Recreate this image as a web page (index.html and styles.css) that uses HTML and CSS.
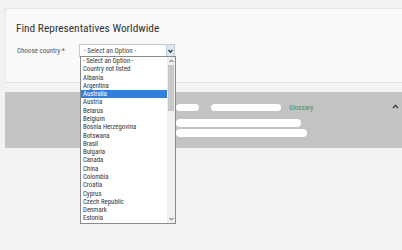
FILE: index.html
```html
<!DOCTYPE html>
<html lang="en">
<head>
    <meta charset="UTF-8">
    <title>Find Representatives Worldwide</title>
    <link rel="stylesheet" href="styles.css">
</head>
<body>
<div class="page">
    <div class="card">
        <h1 class="card-title">Find Representatives Worldwide</h1>
        <div class="form-row">
            <label class="form-label">Choose country *</label>
            <div class="select-wrap">
                <div class="select-box">
                    <span class="select-value">- Select an Option -</span>
                    <span class="select-arrow">
                        <svg width="5" height="4" viewBox="0 0 5 4"><path d="M0.5 0.8 L2.5 3.2 L4.5 0.8" fill="none" stroke="#333" stroke-width="1.3"/></svg>
                    </span>
                </div>
            </div>
        </div>
    </div>
    <div class="band">
        <div class="band-row">
            <span class="blot blot-a"></span>
            <span class="blot blot-b"></span>
            <span class="band-link">Glossary</span>
            <span class="band-caret">
                <svg width="7" height="5" viewBox="0 0 7 5"><path d="M1 4 L3.5 1.2 L6 4" fill="none" stroke="#444" stroke-width="1.4"/></svg>
            </span>
        </div>
        <span class="blot blot-c"></span>
        <span class="blot blot-d"></span>
    </div>

    <ul class="option-list">
        <li>- Select an Option -</li>
        <li>Country not listed</li>
        <li>Albania</li>
        <li>Argentina</li>
        <li class="active">Australia</li>
        <li>Austria</li>
        <li>Belarus</li>
        <li>Belgium</li>
        <li>Bosnia Herzegovina</li>
        <li>Botswana</li>
        <li>Brasil</li>
        <li>Bulgaria</li>
        <li>Canada</li>
        <li>China</li>
        <li>Colombia</li>
        <li>Croatia</li>
        <li>Cyprus</li>
        <li>Czech Republic</li>
        <li>Denmark</li>
        <li>Estonia</li>
    </ul>
    <div class="list-scroll">
        <span class="scroll-up">
            <svg width="5" height="4" viewBox="0 0 5 4"><path d="M0.5 3 L2.5 1 L4.5 3" fill="none" stroke="#555" stroke-width="1"/></svg>
        </span>
        <span class="scroll-track">
            <span class="scroll-thumb"></span>
        </span>
        <span class="scroll-down">
            <svg width="5" height="4" viewBox="0 0 5 4"><path d="M0.5 1 L2.5 3 L4.5 1" fill="none" stroke="#555" stroke-width="1"/></svg>
        </span>
    </div>
</div>
</body>
</html>
```

FILE: styles.css
```css
*{
    margin: 0;
    padding: 0;
    box-sizing: border-box;
}
body{
    width: 402px;
    height: 250px;
    background: #f2f2f2;
    font-family: "Roboto Condensed", Roboto, "Liberation Sans", sans-serif;
    overflow: hidden;
}
.page{
    position: relative;
    padding: 8px 0 0 5px;
}
.card{
    height: 75px;
    background: #f9f9f9;
    border-top: 1px solid #e6e6e6;
    border-left: 1px solid #e6e6e6;
    border-bottom: 1px solid #e2e2e2;
    padding: 11px 0 0 10px;
}
.card-title{
    font-size: 11.4px;
    font-weight: 400;
    color: #333;
    line-height: 16px;
}
.form-row{
    display: flex;
    align-items: center;
    margin-top: 8px;
}
.form-label{
    width: 63px;
    padding-left: 1px;
    font-size: 7px;
    color: #555;
}
.select-box{
    width: 96px;
    height: 13px;
    background: #fff;
    border: 1px solid #c8c8c8;
    display: flex;
    align-items: center;
}
.select-value{
    flex: 1;
    font-size: 7px;
    color: #444;
    padding-left: 4px;
}
.select-arrow{
    width: 8px;
    height: 100%;
    background: #dce8f5;
    border-left: 1px solid #b9cde3;
    display: flex;
    align-items: center;
    justify-content: center;
}
.band{
    margin-top: 9px;
    height: 56px;
    background: #c3c3c3;
    padding: 11px 0 0 171px;
}
.band-row{
    display: flex;
    align-items: center;
    height: 9px;
}
.blot{
    display: block;
    height: 7px;
    background: #fff;
    border-radius: 4px;
}
.blot-a{
    width: 23px;
}
.blot-b{
    width: 70px;
    margin-left: 12px;
}
.band-link{
    margin-left: 8px;
    font-size: 7px;
    color: #3f8f6a;
}
.band-caret{
    margin-left: auto;
    margin-right: 3px;
    display: flex;
    align-items: center;
    padding-bottom: 3px;
}
.blot-c{
    width: 125px;
    margin-top: 7px;
    height: 8px;
}
.blot-d{
    width: 131px;
    margin-top: 2px;
    height: 8px;
}
.option-list{
    position: absolute;
    left: 80px;
    top: 56px;
    width: 96px;
    height: 168px;
    list-style: none;
    background: #fff;
    border: 1px solid #8a8a8a;
    font-size: 6.8px;
    color: #333;
    line-height: 8.28px;
}
.option-list li{
    padding-left: 2px;
    margin-right: 8px;
}
.option-list li.active{
    background: #3080e0;
    color: #fff;
}
.list-scroll{
    position: absolute;
    left: 167px;
    top: 57px;
    width: 8px;
    height: 166px;
    background: #f0f0f0;
    display: flex;
    flex-direction: column;
    align-items: center;
}
.scroll-up,
.scroll-down{
    height: 8px;
    display: flex;
    align-items: center;
}
.scroll-track{
    flex: 1;
    width: 100%;
    display: flex;
    justify-content: center;
}
.scroll-thumb{
    width: 6px;
    height: 46px;
    background: #c8c8c8;
}
```
